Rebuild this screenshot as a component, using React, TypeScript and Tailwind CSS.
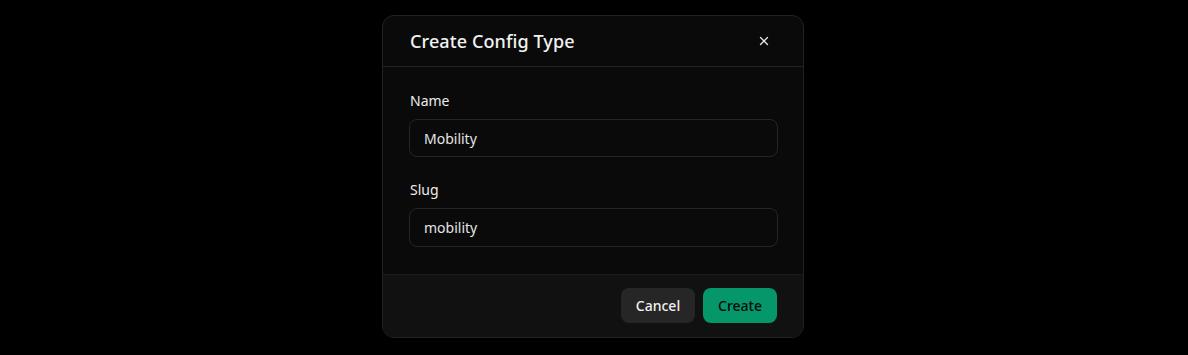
import { X } from "lucide-react";

export default function App() {
  return (
    <div className="min-h-[355px] w-full bg-black flex justify-center pr-[2px] pt-[15px] font-['Noto_Sans',sans-serif]">
      <div className="w-[422px] h-[323px] rounded-xl border border-[#222] bg-[#0a0a0a] overflow-hidden flex flex-col">
        <div className="h-[51px] flex items-center justify-between px-[27px] border-b border-[#222]">
          <h2 className="text-[18px] font-medium text-[#f2f2f2] tracking-[0.1px]">Create Config Type</h2>
          <button className="text-[#e5e5e5] mr-[5px]">
            <X size={14} strokeWidth={2.2} />
          </button>
        </div>
        <div className="flex-1 pl-[26px] pr-[25px] pt-[24px] flex flex-col">
          <label className="pl-px text-[14px] font-normal text-[#ededed] leading-5">Name</label>
          <input
            readOnly
            value="Mobility"
            className="mt-[8px] h-[38px] w-full rounded-lg border border-[#262626] bg-[#0a0a0a] px-[14px] text-[14px] text-[#e5e5e5] outline-none"
          />
          <label className="pl-px mt-[23px] text-[14px] font-normal text-[#ededed] leading-5">Slug</label>
          <input
            readOnly
            value="mobility"
            className="mt-[8px] h-[39px] w-full rounded-lg border border-[#262626] bg-[#0a0a0a] px-[14px] text-[14px] text-[#e5e5e5] outline-none"
          />
        </div>
        <div className="h-[63px] bg-[#111] border-t border-[#1c1c1c] flex items-center justify-end gap-2 px-[26px] pb-[2px]">
          <button className="h-[35px] w-[74px] rounded-lg bg-[#262626] text-[14px] font-medium text-[#f0f0f0]">Cancel</button>
          <button className="h-[35px] w-[74px] rounded-lg bg-[#059669] text-[14px] font-medium text-[#0a0a0a]">Create</button>
        </div>
      </div>
    </div>
  );
}
